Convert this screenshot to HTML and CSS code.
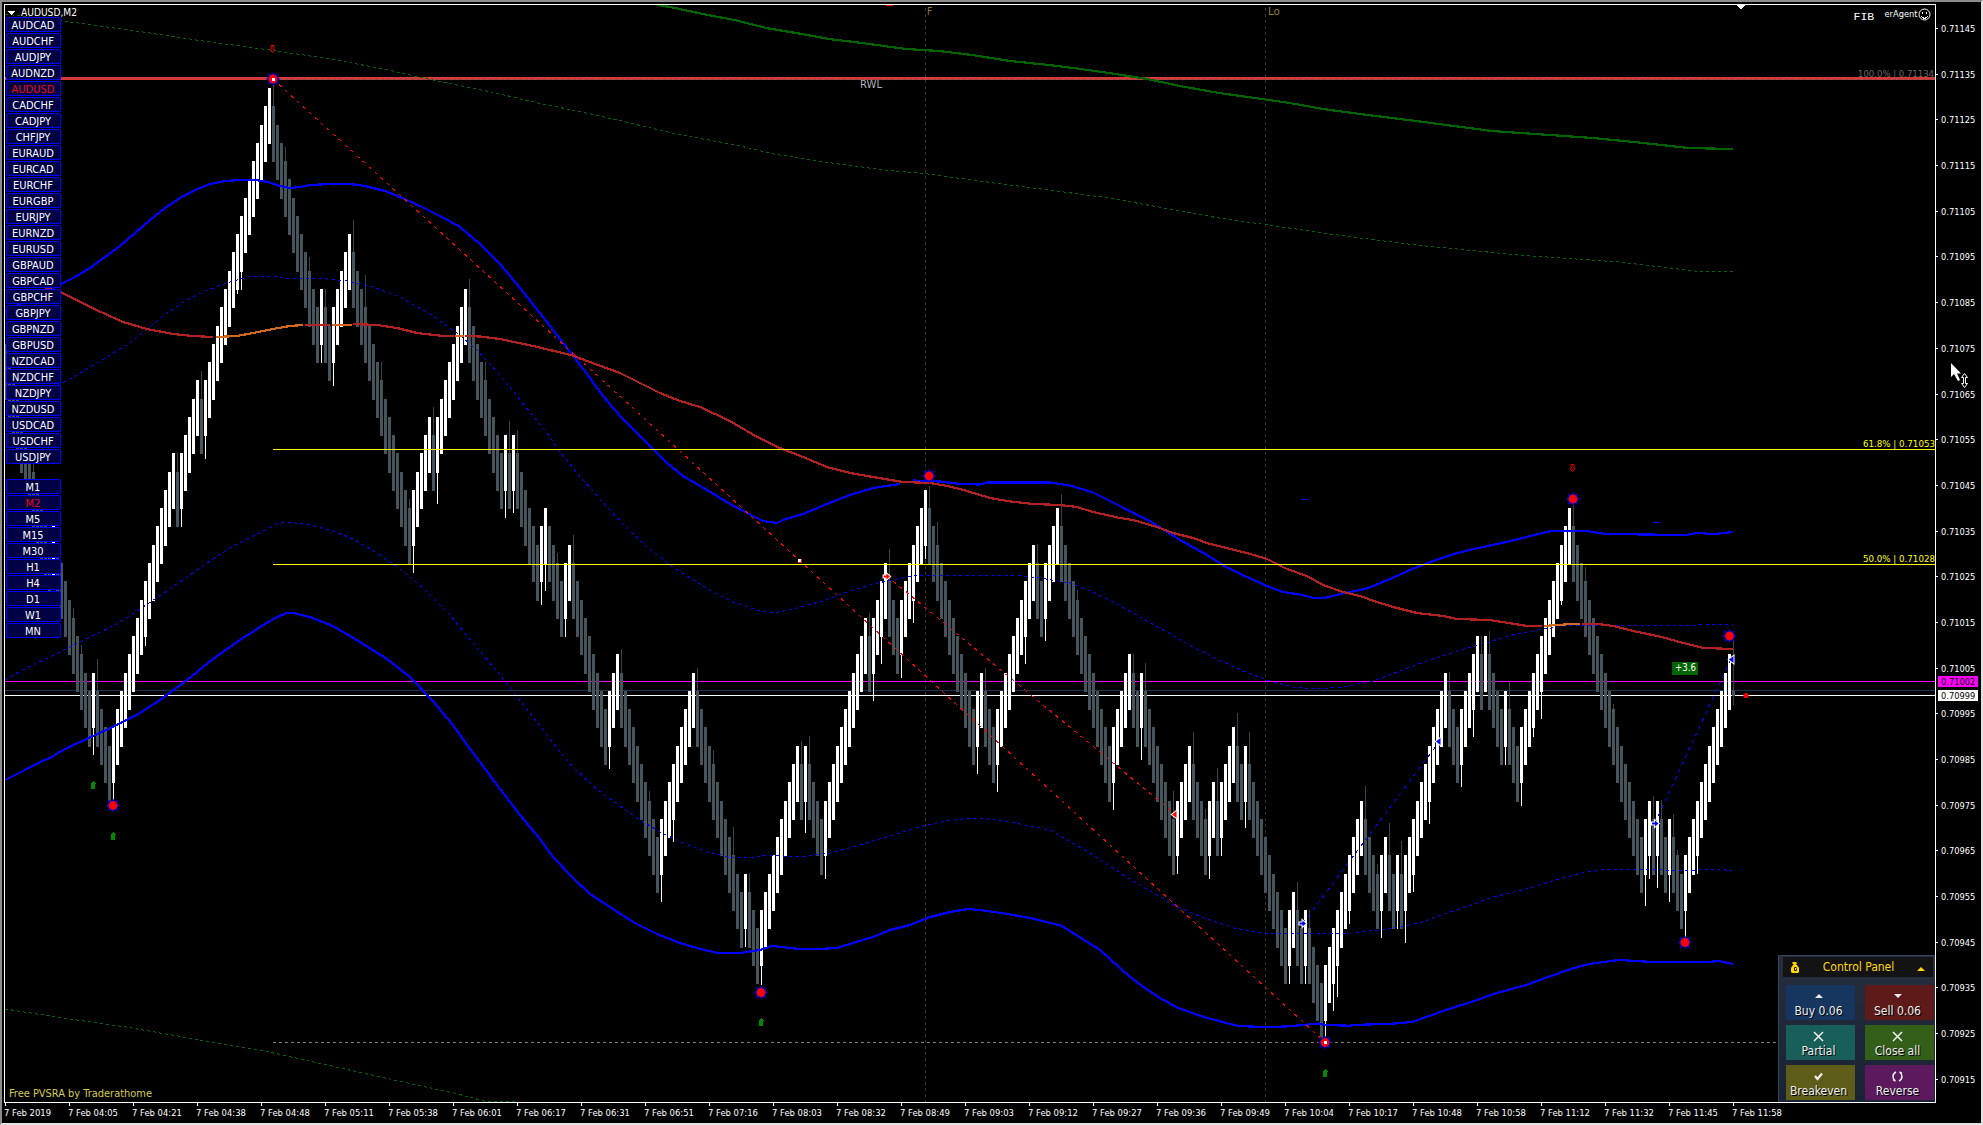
FILE: index.html
```html
<!DOCTYPE html>
<html lang="en">
<head>
    <meta charset="UTF-8">
    <title>AUDUSD,M2</title>
    <link rel="stylesheet" href="styles.css">
</head>
<body>
    <div class="window">
        <div class="plot">
            <svg class="chart" id="chart" width="1936" height="1103" viewBox="0 0 1936 1103">
                <defs>
                    <clipPath id="plotArea"><rect x="5" y="5" width="1930" height="1097"/></clipPath>
                    <g id="star">
                        <path class="star" d="M0-7 L1.500-4.600 L5-5.500 L4.600-2 L7 0 L4.600 2 L5 5.500 L1.500 4.600 L0 7 L-1.500 4.600 L-5 5.500 L-4.600 2 L-7 0 L-4.600-2 L-5-5.500 L-1.500-4.600 Z"/>
                        <circle class="dot" r="4.400"/>
                    </g>
                    <path id="up" class="arrow-up" d="M0-4 L3-1 H2 V4 H-2 V-1 H-3 Z"/>
                    <path id="down" class="arrow-down" d="M-1.500-3.500 H1.500 V1 H2.500 L0 3.500 L-2.500 1 H-1.500 Z"/>
                    <path id="entry" d="M-3-1 H0 V-3 L3.500 0 L0 3 V1 H-3 Z"/>
                    <path id="exit" d="M-3 0 L1.500-3.500 V3.500 Z"/>
                    <rect id="handle" class="handle" x="-1.500" y="-1.500" width="3" height="3"/>
                </defs>
                <g clip-path="url(#plotArea)">
                    <path class="period" d="M925.500 8V1102 M1265.500 8V1102"/>
                    <path class="fib-zero" d="M273 1042.500H1935"/>
                    <path class="line-magenta" d="M5 681.500H1935"/>
                    <path class="line-navy" d="M5 690.500H1935"/>
                    <path class="line-price" d="M5 695.500H1935"/>
                    <g id="bars"></g>
                    <path class="line-rwl" d="M5 78.500H1935"/>
                    <path class="line-rwl-dash" d="M273 79.500H1935"/>
                    <g id="curves"></g>
                    <path class="line-fib" d="M273 449.500H1935 M273 564.500H1935"/>
                    <path class="blue-mark" d="M1302 499.500h7 M1654 522.500h7"/>
                    <path class="red-mark" d="M886 5.500h7"/>
                    <path class="trend" d="M273 79L799 560L1325 1042 M887 576L1175 814"/>
                    <path class="trade" d="M1303 923L1440 741 M1655 823L1731 659"/>
                    <use href="#star" x="273" y="79"/>
                    <use href="#star" x="113" y="805.500"/>
                    <use href="#star" x="761" y="992.500"/>
                    <use href="#star" x="929" y="476"/>
                    <use href="#star" x="1325" y="1042.500"/>
                    <use href="#star" x="1573" y="499"/>
                    <use href="#star" x="1685" y="942.500"/>
                    <g class="last"><use href="#star" x="1729.500" y="636"/></g>
                    <use href="#up" x="93" y="785"/>
                    <use href="#up" x="113" y="836"/>
                    <use href="#up" x="761" y="1022"/>
                    <use href="#up" x="1325" y="1073"/>
                    <use href="#down" x="272.500" y="49"/>
                    <use href="#down" x="1572.500" y="468"/>
                    <g class="sell">
                        <use href="#entry" x="886.500" y="576.500"/>
                        <use href="#exit" x="1175" y="814.500"/>
                    </g>
                    <g class="buy">
                        <use href="#entry" x="1302.500" y="923.500"/>
                        <use href="#entry" x="1655" y="823.500"/>
                        <use href="#exit" x="1439" y="741.500"/>
                        <use href="#exit" x="1732" y="659.500"/>
                    </g>
                    <use href="#handle" x="273.500" y="79.500"/>
                    <use href="#handle" x="799.500" y="560.500"/>
                    <use href="#handle" x="1325.500" y="1042.500"/>
                    <circle class="dot" cx="1746" cy="695.500" r="2.600"/>
                    <path class="white" d="M1736 5h9l-4.500 4.500z M8 11h7l-3.500 4z"/>
                </g>
                <path class="frame" d="M4.500 1103V4.500H1935.500V1102.500H4.500"/>
                <text class="title" x="21" y="16" textLength="56" lengthAdjust="spacingAndGlyphs">AUDUSD,M2</text>
                <text class="session" x="927" y="15">F</text>
                <text class="session" x="1268" y="15" textLength="12" lengthAdjust="spacingAndGlyphs">Lo</text>
                <text class="rwl" x="860" y="88" textLength="22" lengthAdjust="spacingAndGlyphs">RWL</text>
                <text class="fib-off" x="1858" y="77" textLength="76" lengthAdjust="spacingAndGlyphs">100.0% | 0.71134</text>
                <text class="fib" x="1863" y="447" textLength="72" lengthAdjust="spacingAndGlyphs">61.8% | 0.71053</text>
                <text class="fib" x="1863" y="562" textLength="72" lengthAdjust="spacingAndGlyphs">50.0% | 0.71028</text>
                <text class="fib-title" x="1853.500" y="20">FIB</text>
                <text class="agent" x="1884.500" y="17" textLength="33" lengthAdjust="spacingAndGlyphs">erAgent</text>
                <g class="smiley">
                    <circle cx="1924.500" cy="14.500" r="5.500"/>
                    <path d="M1921 16.500q3.500 3.500 7 0 M1922.500 11.500v2 M1926.500 11.500v2"/>
                </g>
                <rect class="pips-box" x="1672" y="662" width="26" height="13"/>
                <text class="pips" x="1675" y="671" textLength="21" lengthAdjust="spacingAndGlyphs">+3.6</text>
                <text class="credit" x="9" y="1097" textLength="143" lengthAdjust="spacingAndGlyphs">Free PVSRA by Traderathome</text>
            </svg>

            <div class="switcher">
                <div class="group" id="pairs"></div>
                <div class="group" id="frames"></div>
            </div>

            <div class="panel">
                <div class="panel-head">
                    <svg width="8" height="11" viewBox="0 0 8 11">
                        <path fill="#ffd700" d="M2 0h3l1 1-1 2h1l2 3v4l-1 1H1L0 10V6l2-3h1L1 1z"/>
                        <path stroke="#141414" fill="none" d="M5.500 5.500h-2v3h2v-2"/>
                    </svg>
                    <span>Control Panel</span>
                    <i class="tri-up gold"></i>
                </div>
                <div class="panel-grid">
                    <div class="btn buy-btn"><i class="tri-up"></i>Buy 0.06</div>
                    <div class="btn sell-btn"><i class="tri-down"></i>Sell 0.06</div>
                    <div class="btn partial-btn">
                        <svg width="11" height="11" viewBox="0 0 11 11"><path d="M1 1l9 9M10 1l-9 9"/></svg>Partial
                    </div>
                    <div class="btn close-btn">
                        <svg width="11" height="11" viewBox="0 0 11 11"><path d="M1 1l9 9M10 1l-9 9"/></svg>Close all
                    </div>
                    <div class="btn even-btn">
                        <svg width="9" height="11" viewBox="0 0 9 11"><path stroke-width="2.200" d="M1 5l2.500 3L8 2.500"/></svg>Breakeven
                    </div>
                    <div class="btn reverse-btn">
                        <svg width="11" height="11" viewBox="0 0 11 11"><path d="M4 1Q1 2.500 1 5.500T3.500 10M1 8.500l2.500 1.500M7 10q3-1.500 3-4.500T7.500 1M10 2.500L7.500 1"/></svg>Reverse
                    </div>
                </div>
            </div>
        </div>

        <div class="price-axis">
            <div class="prices" id="prices"></div>
            <div class="tag tag-magenta">0.71002</div>
            <div class="tag tag-white">0.70999</div>
            <svg class="cursor" width="20" height="28" viewBox="0 0 20 28">
                <path fill="#fff" d="M1 1v14l3-3 4 7 2-1-3-6.500h4z"/>
                <path fill="#000" stroke="#fff" d="M14.500 11.500l3 4h-2v6h2l-3 4-3-4h2v-6h-2z"/>
            </svg>
        </div>
        <div class="time-axis" id="times"></div>
    </div>

    <script src="chart.js"></script>
</body>
</html>
```

FILE: styles.css
```css
body {
    margin: 0;
    background: #000;
    color: #fff;
    font-family: "DejaVu Sans Condensed", "DejaVu Sans", sans-serif;
    font-stretch: condensed;
    overflow: hidden;
}
.window {
    position: relative;
    display: grid;
    grid-template-columns: 1936px 47px;
    grid-template-rows: 1103px 22px;
    width: 1983px;
    height: 1125px;
}
/* bevel of the chart window */
.window::after {
    content: "";
    position: absolute;
    inset: 0;
    border-top: 2px solid #8c8c8c;
    border-left: 2px solid #8c8c8c;
    border-right: 2px solid #e3e3e3;
    border-bottom: 2px solid #e3e3e3;
    pointer-events: none;
}
.plot {
    position: relative;
}
.chart {
    display: block;
}
.chart path, .chart rect {
    shape-rendering: crispEdges;
}
.chart path {
    fill: none;
}
.frame { stroke: #fff; }
.period { stroke: #333; stroke-dasharray: 3 3; }
.fib-zero { stroke: #808080; stroke-dasharray: 3 3; }
.line-magenta { stroke: #f0f; }
.line-navy { stroke: #1c2f55; }
.line-price { stroke: #fff; }
.line-rwl { stroke: #d43a3a; stroke-width: 3; }
.line-rwl-dash { stroke: #85504c; stroke-dasharray: 3 3; }
.line-fib { stroke: #ff0; }
.blue-mark { stroke: #00f; }
.red-mark { stroke: #f00; }
.trend { stroke: #f00; stroke-dasharray: 3.500 4.600; }
.trade { stroke: #00f; stroke-dasharray: 3.500 4.500; }
.bull { fill: #fff; }
.bear { fill: #46555b; }
.bear-wick { fill: #36464a; }

.chart .band { stroke: #00f; stroke-width: 2.2; }
.chart .band-dash { stroke: #00f; stroke-dasharray: 3 3.500; }
.chart .ma { stroke: #b22222; stroke-width: 2.2; }
.chart .ma-flat { stroke: #d2691e; stroke-width: 2.2; }
.chart .outer { stroke: #006400; stroke-width: 2.2; }
.chart .outer-dash { stroke: #006400; stroke-dasharray: 3 3; }

.chart .star { fill: #0000c8; shape-rendering: auto; }
.last .star { fill: #900; }
.dot { fill: #f00; }
.chart .arrow-up { fill: #008a00; stroke: none; }
.chart .arrow-down { fill: #300; stroke: #d00000; shape-rendering: auto; }
.sell, .buy { stroke: #fff; stroke-width: 2; paint-order: stroke; }
.chart .sell use { fill: #f00; }
.chart .buy use { fill: #00f; }
.chart #entry, .chart #exit { fill: inherit; shape-rendering: auto; }
.handle { fill: #fff; stroke: #f00; stroke-width: 1; paint-order: stroke; }
.chart .white { fill: #fff; }

.chart text { fill: #fff; font-size: 10.5px; }
.chart .session { fill: #8d7d35; font-size: 10px; }
.chart .rwl { fill: #b0b0b0; font-size: 10px; }
.chart .fib { fill: #ff0; font-size: 9.5px; }
.chart .fib-off { fill: #686868; font-size: 9.5px; }
.chart .fib-title { font-family: "Liberation Mono", monospace; font-size: 11.5px; }
.chart .agent { font-size: 9.5px; }
.chart .pips { font-size: 10px; }
.chart .credit { fill: #d5cc52; font-size: 11px; }
.pips-box { fill: #006400; }
.smiley circle { fill: none; stroke: #fff; }
.smiley path { stroke: #fff; }

/* symbol and timeframe buttons */
.switcher {
    position: absolute;
    left: 6px;
    top: 17px;
    display: flex;
    flex-direction: column;
    gap: 15px;
}
.group {
    display: grid;
    gap: 1px;
}
.group div {
    width: 53px;
    height: 13px;
    border: 1px solid #00f;
    border-radius: 1px;
    background: #000045;
    font-size: 11px;
    line-height: 15px;
    text-align: center;
}
.group span {
    margin-left: -1px;
}
.group .active {
    color: #f00010;
}

.panel {
    position: absolute;
    left: 1778px;
    top: 955px;
    box-sizing: border-box;
    width: 157px;
    height: 147px;
    padding: 1px 1px 0 4px;
    border: 1px solid #33475c;
    border-width: 1px 0 0 1px;
    background: linear-gradient(#262d3e, #192334);
}
.panel-head {
    display: flex;
    align-items: center;
    justify-content: space-between;
    height: 20px;
    margin-right: 1px;
    padding: 0 8px;
    box-sizing: border-box;
    background: #131313;
    color: #ffd700;
    font-size: 12px;
}
.panel-head span {
    padding-left: 1px;
}
.panel-grid {
    display: grid;
    grid-template-columns: 69px 69px;
    grid-auto-rows: 35px;
    gap: 5px 10px;
    padding: 8px 0 0 3px;
}
.btn {
    display: flex;
    flex-direction: column;
    align-items: center;
    justify-content: flex-end;
    padding: 0 4px 2px 0;
    color: #eee;
    font-size: 12px;
    line-height: 14px;
    text-shadow: 1px 1px 0 #000;
    white-space: nowrap;
    box-sizing: border-box;
    height: 35px;
}
.btn svg {
    fill: none;
    stroke: #f0f0f0;
    stroke-width: 1.500;
    margin-bottom: 2px;
}
.tri-up, .tri-down {
    border: 4px solid transparent;
    border-top: 0;
    border-bottom-color: #eee;
    margin-bottom: 6px;
}
.tri-down {
    border-top: 4px solid #eee;
    border-bottom: 0;
}
.tri-up.gold {
    border-bottom-color: #ffd700;
    margin: 3px 0 0;
}
.buy-btn { background: #17365f; }
.sell-btn { background: #5e1919; }
.partial-btn { background: #195f59; }
.close-btn { background: #335f19; }
.even-btn { background: #5e5c19; }
.reverse-btn { background: #5c195e; }

.price-axis {
    position: relative;
    font-size: 9.200px;
}
.prices {
    display: grid;
    grid-auto-rows: 45.68px;
    padding-top: 5.800px;
}
.prices div {
    display: flex;
    align-items: center;
    gap: 3px;
}
.prices div::before {
    content: "";
    width: 2px;
    height: 1px;
    background: #fff;
}
.tag {
    position: absolute;
    left: 2px;
    width: 37px;
    height: 11px;
    padding-left: 3px;
    line-height: 11px;
    color: #000;
}
.tag-magenta { top: 676px; background: #f0f; }
.tag-white { top: 690px; background: #fff; }
.cursor {
    position: absolute;
    left: 14px;
    top: 362px;
}

.time-axis {
    display: grid;
    grid-template-columns: repeat(28, 64px);
    padding-left: 5px;
    font-size: 9.400px;
    white-space: nowrap;
}
.time-axis div::before {
    content: "";
    display: block;
    width: 1px;
    height: 3px;
    margin-bottom: 1px;
    background: #fff;
}
.time-axis span {
    margin-left: -1px;
}
```

FILE: chart.js
```js
const NS = 'http://www.w3.org/2000/svg';
const bars = document.getElementById('bars');
const curves = document.getElementById('curves');

function add(parent, tag, attrs) {
    const el = document.createElementNS(NS, tag);
    for (const key in attrs) el.setAttribute(key, attrs[key]);
    parent.appendChild(el);
}

// brick runs: positive = falling bars, negative = rising bars
const runs = [
    11, -1, 9, -1, 4, -16, 1, -5, 1, -17, 12, -1, 2, -5, 15, -5, 1, -8, 9, -1, 1, -1, 6, -2, 4, -2,
    9, -3, 10, -9, 12, -1, 3, -10, 1, -1, 4, -11, 1, -4, 3, -7, 12, -2, 3, -10, 2, -4, 13, -5, 2, -1,
    8, -4, 4, -2, 1, -4, 2, -1, 10, -2, 2, -1, 4, -10, 4, -2, 2, -1, 1, -11, 3, -5, 1, -1, 4, -1, 3,
    -13, 18, -2, 1, -1, 2, -1, 3, -12
];

// wick ends, by bar x
const wicks = {
    33: 463, 73: 608, 81: 645, 93: 755, 97: 659, 113: 800, 145: 646, 177: 453, 181: 527, 201: 371,
    205: 459, 237: 294, 241: 290, 273: 84, 285: 147, 309: 257, 321: 363, 325: 289, 333: 386, 353: 220,
    365: 275, 381: 362, 409: 499, 413: 573, 433: 407, 437: 504, 469: 279, 485: 362, 505: 518, 509: 421,
    513: 513, 517: 430, 541: 605, 545: 591, 557: 553, 565: 637, 573: 535, 609: 769, 621: 649, 649: 791,
    661: 902, 673: 842, 697: 668, 713: 750, 733: 827, 745: 947, 749: 873, 761: 985, 801: 741, 805: 833,
    809: 736, 825: 879, 869: 613, 873: 701, 881: 664, 889: 549, 901: 678, 913: 623, 925: 559, 929: 486,
    937: 522, 977: 774, 985: 668, 997: 792, 1025: 664, 1037: 544, 1045: 641, 1061: 494, 1077: 590,
    1113: 810, 1133: 654, 1141: 760, 1145: 663, 1173: 791, 1177: 874, 1193: 732, 1205: 809, 1209: 879,
    1217: 768, 1221: 856, 1237: 713, 1245: 828, 1249: 732, 1289: 984, 1297: 882, 1305: 984, 1309: 910,
    1325: 1043, 1333: 1011, 1337: 997, 1349: 924, 1365: 786, 1377: 864, 1381: 938, 1389: 823, 1397: 929,
    1401: 841, 1405: 943, 1413: 892, 1429: 824, 1449: 672, 1461: 787, 1473: 737, 1481: 636, 1489: 631,
    1505: 765, 1509: 681, 1521: 806, 1533: 737, 1541: 719, 1561: 605, 1573: 505, 1585: 567, 1613: 704,
    1645: 906, 1649: 879, 1653: 796, 1657: 888, 1661: 800, 1669: 902, 1673: 814, 1677: 850, 1685: 943,
    1697: 874
};

const levelY = n => Math.round(88 + 18.27 * n);

let level = 14;
let x = 5;

function bar(falling) {
    const top = levelY(level);
    const bottom = levelY(level + 3) + 1;
    add(bars, 'rect', { class: falling ? 'bear' : 'bull', x: x - 1, y: top, width: 3, height: bottom - top });
    if (wicks[x]) {
        const from = Math.min(wicks[x], top);
        const to = Math.max(wicks[x], bottom);
        add(bars, 'rect', { class: falling ? 'bear-wick' : 'bull', x: x, y: falling ? from : bottom, width: 1, height: falling ? top - from : to - bottom });
    }
}

bar(true);
runs.forEach(run => {
    for (let i = 0; i < Math.abs(run); i++) {
        x += 4;
        level += Math.sign(run);
        bar(run > 0);
    }
});
// bar still forming
add(bars, 'rect', { class: 'bear-wick', x: 1733, y: 640, width: 1, height: 65 });
add(bars, 'rect', { class: 'bear', x: 1732, y: 690, width: 3, height: 6 });

const lines = [
    ['outer', '657,5 670,7 703,14 739,21 766,28 802,34 829,39 862,43 906,49 939,51 972,55 1010,61 1049,65 1081,69 1109,73 1147,79 1180,86 1219,93 1262,99 1290,103 1323,109 1360,114 1416,121 1492,131 1593,138 1644,143 1688,148 1733,149'],
    ['outer-dash', '5,14 63,21 143,32 203,41 277,51 337,60 393,71 423,78 467,87 500,94 538,103 582,112 626,122 676,134 736,145 774,154 824,162 884,170 928,174 994,183 1049,190 1109,198 1164,208 1219,218 1268,225 1323,233 1360,238 1416,245 1518,255 1619,262 1695,271 1733,272'],
    ['outer-dash', '5,1009 63,1018 126,1027 189,1038 269,1052 345,1069 412,1084 454,1093 484,1101 518,1101'],
    ['band', '5,312 20,304 61,284 75,277 90,268 105,257 120,246 135,233 150,220 165,208 180,198 195,190 210,184 225,181 240,180 255,180 268,182 280,186 290,188 300,187 310,185 330,184 350,184 365,186 385,191 400,197 420,206 440,216 460,227 480,244 500,264 520,288 543,317 571,353 584,370 600,392 613,408 623,419 647,443 667,463 683,476 707,490 730,504 747,513 763,521 777,523 783,520 803,514 827,504 850,495 873,488 900,484'],
    ['band', '913,480.5 940,481.5 960,484 980,484.5 987,482.5 1050,482.5 1070,485.5 1093,492.5 1120,506 1153,523 1180,540 1207,555 1227,567.5 1247,577 1267,586 1283,592 1303,595 1313,598 1325,598 1340,594 1367,588.5 1390,579 1410,570 1433,561 1457,553 1478,548 1502,543 1527,537 1551,531 1586,531 1606,534 1686,535 1697,533 1714,534 1733,532'],
    ['band', '5,780 25,770 42,761 50,758 63,750 93,736 117,725 140,713 163,698 187,680 213,659 237,642 260,627 277,617 287,613 293,613 310,617 333,626 360,642 387,659 410,677 433,701 453,725 470,749 480,762 500,789 520,815 540,839 553,857 573,878 590,894 613,909 633,922 657,934 680,943 700,949 718,953 740,953 760,950 772,946 800,949 817,949 837,948 853,943 873,937 890,930 910,925 930,917 950,912 968,909 980,910 1008,914 1035,919 1062,926 1100,950 1130,977 1145,988 1160,998 1178,1008 1204,1017 1238,1026 1264,1027 1286,1026.5 1319,1023.5 1325,1025 1349,1025.7 1360,1024.7 1389,1024 1412,1022 1426,1017 1449,1009 1471,1002 1497,993 1526,985 1548,977 1571,969 1589,964 1619,960 1652,962 1708,962 1719,961 1733,964'],
    ['band-dash', '5,412 62,383 72,378 97,363 127,345 147,329 167,313 187,300 207,290 227,283 247,277 273,276 290,279 317,278 347,281 373,287 400,297 430,314 457,333 477,350 498,373 512,390 530,412 547,433 563,456 583,480 607,507 627,528 647,547 667,563 690,578 713,592 733,602 757,610 773,613 797,608 823,601 850,591 873,584 897,579 920,575 1013,575 1040,578 1070,583 1093,592 1117,604 1140,617 1167,632 1193,647 1217,659 1243,671 1270,681 1293,687 1317,689 1343,687 1373,681 1400,671 1427,661 1460,650 1482,644 1516,634 1544,629 1572,625 1662,625 1676,626 1697,625 1733,624'],
    ['band-dash', '5,680 23,670 60,652 90,637 117,624 143,607 167,591 190,575 210,561 233,546 257,534 277,524 288,522 310,525 333,531 353,539 377,553 400,569 423,588 450,615 473,643 500,675 530,713 553,743 573,767 593,786 613,801 637,818 660,832 683,843 707,852 730,857 747,858 770,855 780,856 807,856 830,853 853,847 880,839 903,832 923,826 947,821 970,818 987,819 1010,822 1050,830 1090,853 1125,876 1160,897 1178,907 1201,917 1234,928 1264,933 1308,934 1352,933 1389,929 1419,923 1445,914 1474,904 1493,897 1523,890 1552,881 1582,873 1608,869 1645,869 1663,870 1696,870 1719,869 1732,871'],
    ['ma', '45,288 61,292 80,302 103,313 123,322 147,329 173,334 193,336 213,337'],
    ['ma-flat', '216,337 237,336 253,333 273,329 290,326 303,325'],
    ['ma', '305,325 330,325'],
    ['ma-flat', '332,325 352,325'],
    ['ma', '353,324 377,325 397,328 417,333 443,336 454,336'],
    ['ma-flat', '455,336 464,336'],
    ['ma', '465,336 480,336.5 500,339 533,346 571,355 598,365 620,373 640,383 660,393 680,401 700,407 730,421 757,437 780,448 803,457 827,467 850,473 873,477 903,482 930,483 947,486 960,489 990,498 1007,501 1033,504 1060,505 1077,507 1093,512 1120,518 1133,520 1157,527 1173,533 1193,538 1210,544 1247,553 1267,559 1287,569 1307,576 1323,585 1343,592 1360,596 1377,602 1393,607 1417,613 1443,616 1457,619 1489,620 1509,623 1527,626 1542,626'],
    ['ma-flat', '1544,626 1558,625 1572,624 1580,624'],
    ['ma', '1582,624 1598,624 1613,626 1638,632 1662,637 1683,643 1704,648 1733,649']
];
lines.forEach(([name, points]) => add(curves, 'path', { class: name, d: 'M' + points }));

function fill(id, items, active) {
    document.getElementById(id).innerHTML = items
        .map(t => `<div${t === active ? ' class="active"' : ''}><span>${t}</span></div>`).join('');
}

fill('pairs', ('AUDCAD AUDCHF AUDJPY AUDNZD AUDUSD CADCHF CADJPY CHFJPY EURAUD EURCAD EURCHF EURGBP EURJPY EURNZD ' +
    'EURUSD GBPAUD GBPCAD GBPCHF GBPJPY GBPNZD GBPUSD NZDCAD NZDCHF NZDJPY NZDUSD USDCAD USDCHF USDJPY').split(' '), 'AUDUSD');
fill('frames', ['M1', 'M2', 'M5', 'M15', 'M30', 'H1', 'H4', 'D1', 'W1', 'MN'], 'M2');

const prices = [];
for (let p = 71145; p >= 70915; p -= 10) prices.push('0.' + p);
fill('prices', prices);

fill('times', ('2019 04:05 04:21 04:38 04:48 05:11 05:38 06:01 06:17 06:31 06:51 07:16 08:03 08:32 08:49 09:03 ' +
    '09:12 09:27 09:36 09:49 10:04 10:17 10:48 10:58 11:12 11:32 11:45 11:58').split(' ').map(t => '7 Feb ' + t));
```
